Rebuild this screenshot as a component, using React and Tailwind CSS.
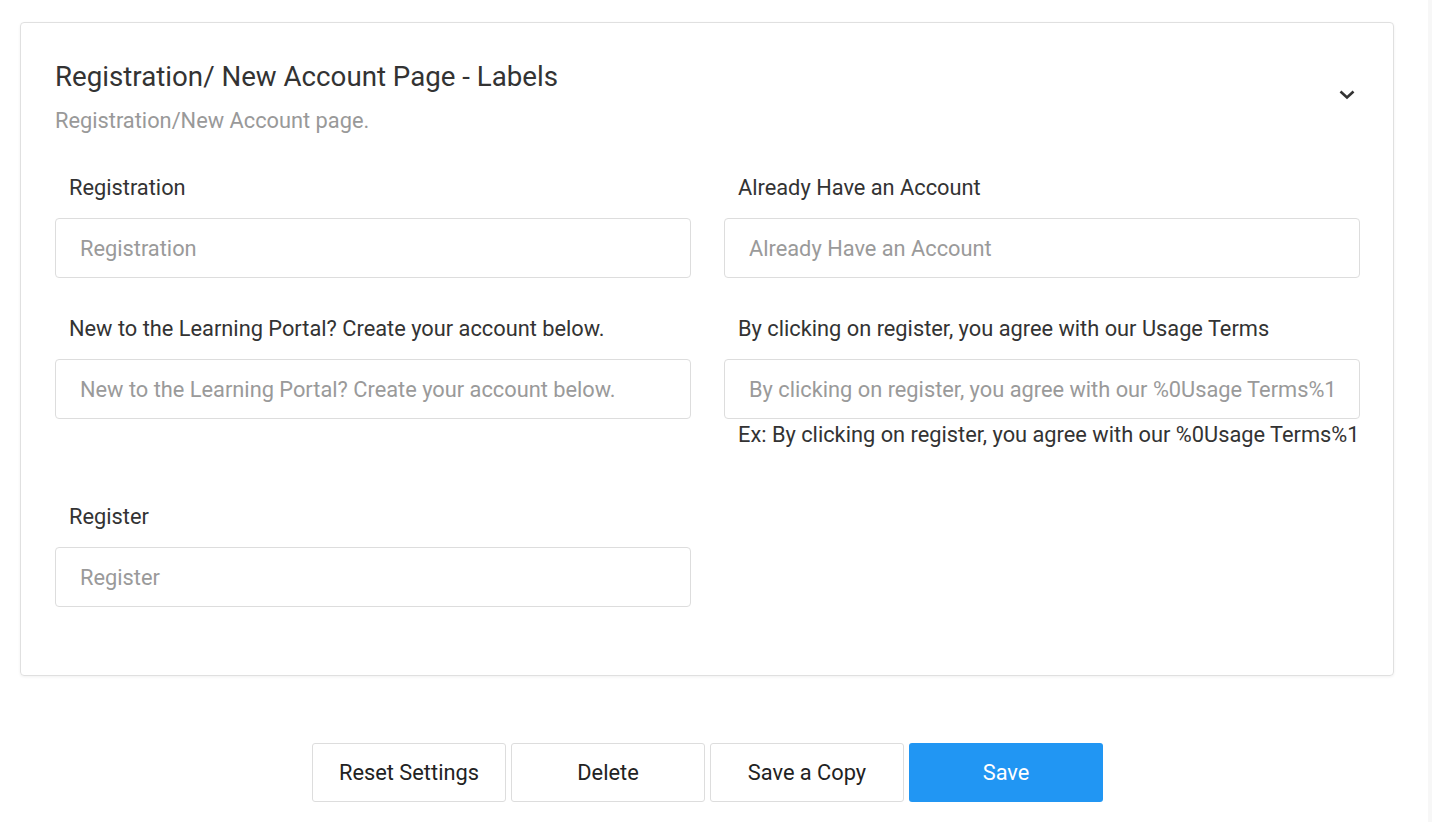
import React from "react";

const fields = [
  { label: "Registration", placeholder: "Registration" },
  { label: "Already Have an Account", placeholder: "Already Have an Account" },
  {
    label: "New to the Learning Portal? Create your account below.",
    placeholder: "New to the Learning Portal? Create your account below.",
  },
  {
    label: "By clicking on register, you agree with our Usage Terms",
    placeholder: "By clicking on register, you agree with our %0Usage Terms%1",
    hint: "Ex: By clicking on register, you agree with our %0Usage Terms%1",
  },
  { label: "Register", placeholder: "Register" },
];

const Field = ({ item }) => (
  <div className="flex flex-col">
    <label className="pl-[14px] text-[21.8px] leading-[26px] text-[#333] mb-[17px] whitespace-nowrap">
      {item.label}
    </label>
    <input
      type="text"
      placeholder={item.placeholder}
      className="h-[60px] w-full border border-[#dddddd] rounded-[4px] px-[24px] text-[21.8px] text-[#333] placeholder:text-[#9a9a9a] outline-none"
    />
    {item.hint && (
      <div className="pl-[14px] mt-[4px] mb-[19px] text-[21.8px] leading-[24px] text-[#333] whitespace-nowrap">
        {item.hint}
      </div>
    )}
  </div>
);

export default function App() {
  const buttons = ["Reset Settings", "Delete", "Save a Copy"];

  return (
    <div className="flex min-h-[822px] bg-white font-['Roboto',sans-serif]">
      <div className="flex-1 pl-[20px] pr-[34px] pt-[22px]">
        {/* Card */}
        <div className="border border-[#e0e0e0] rounded-[4px] shadow-[0_1px_3px_rgba(0,0,0,0.06)] pt-[38px] pl-[34px] pr-[33px] pb-[68px]">
          <div className="flex justify-between items-start">
            <div>
              <h2 className="text-[27.7px] leading-[32px] text-[#333]">
                Registration/ New Account Page - Labels
              </h2>
              <p className="mt-[16px] text-[21.8px] leading-[24px] text-[#999]">
                Registration/New Account page.
              </p>
            </div>
            <button className="mt-[24px] mr-[3px] w-[20px] h-[20px] flex items-center justify-center">
              <svg width="20" height="20" viewBox="0 0 20 20" fill="none">
                <polyline
                  points="3.5,6.5 10,12.5 16.5,6.5"
                  stroke="#333"
                  strokeWidth="2.6"
                />
              </svg>
            </button>
          </div>

          <div className="mt-[42px] grid grid-cols-2 gap-x-[33px] gap-y-[38px] items-start">
            {fields.map((item, index) => (
              <Field key={index} item={item} />
            ))}
          </div>
        </div>

        {/* Actions */}
        <div className="mt-[67px] flex justify-center gap-[5.5px] pl-[1px]">
          {buttons.map((name) => (
            <button
              key={name}
              className="w-[193.5px] h-[59px] pt-[2px] border border-[#dddddd] rounded-[3px] bg-white text-[21.8px] text-[#222]"
            >
              {name}
            </button>
          ))}
          <button className="w-[193.5px] h-[59px] pt-[2px] rounded-[3px] bg-[#2196f3] text-[21.8px] text-white">
            Save
          </button>
        </div>
      </div>
      <div className="w-[4px] bg-[#f7f7f7]" />
    </div>
  );
}
